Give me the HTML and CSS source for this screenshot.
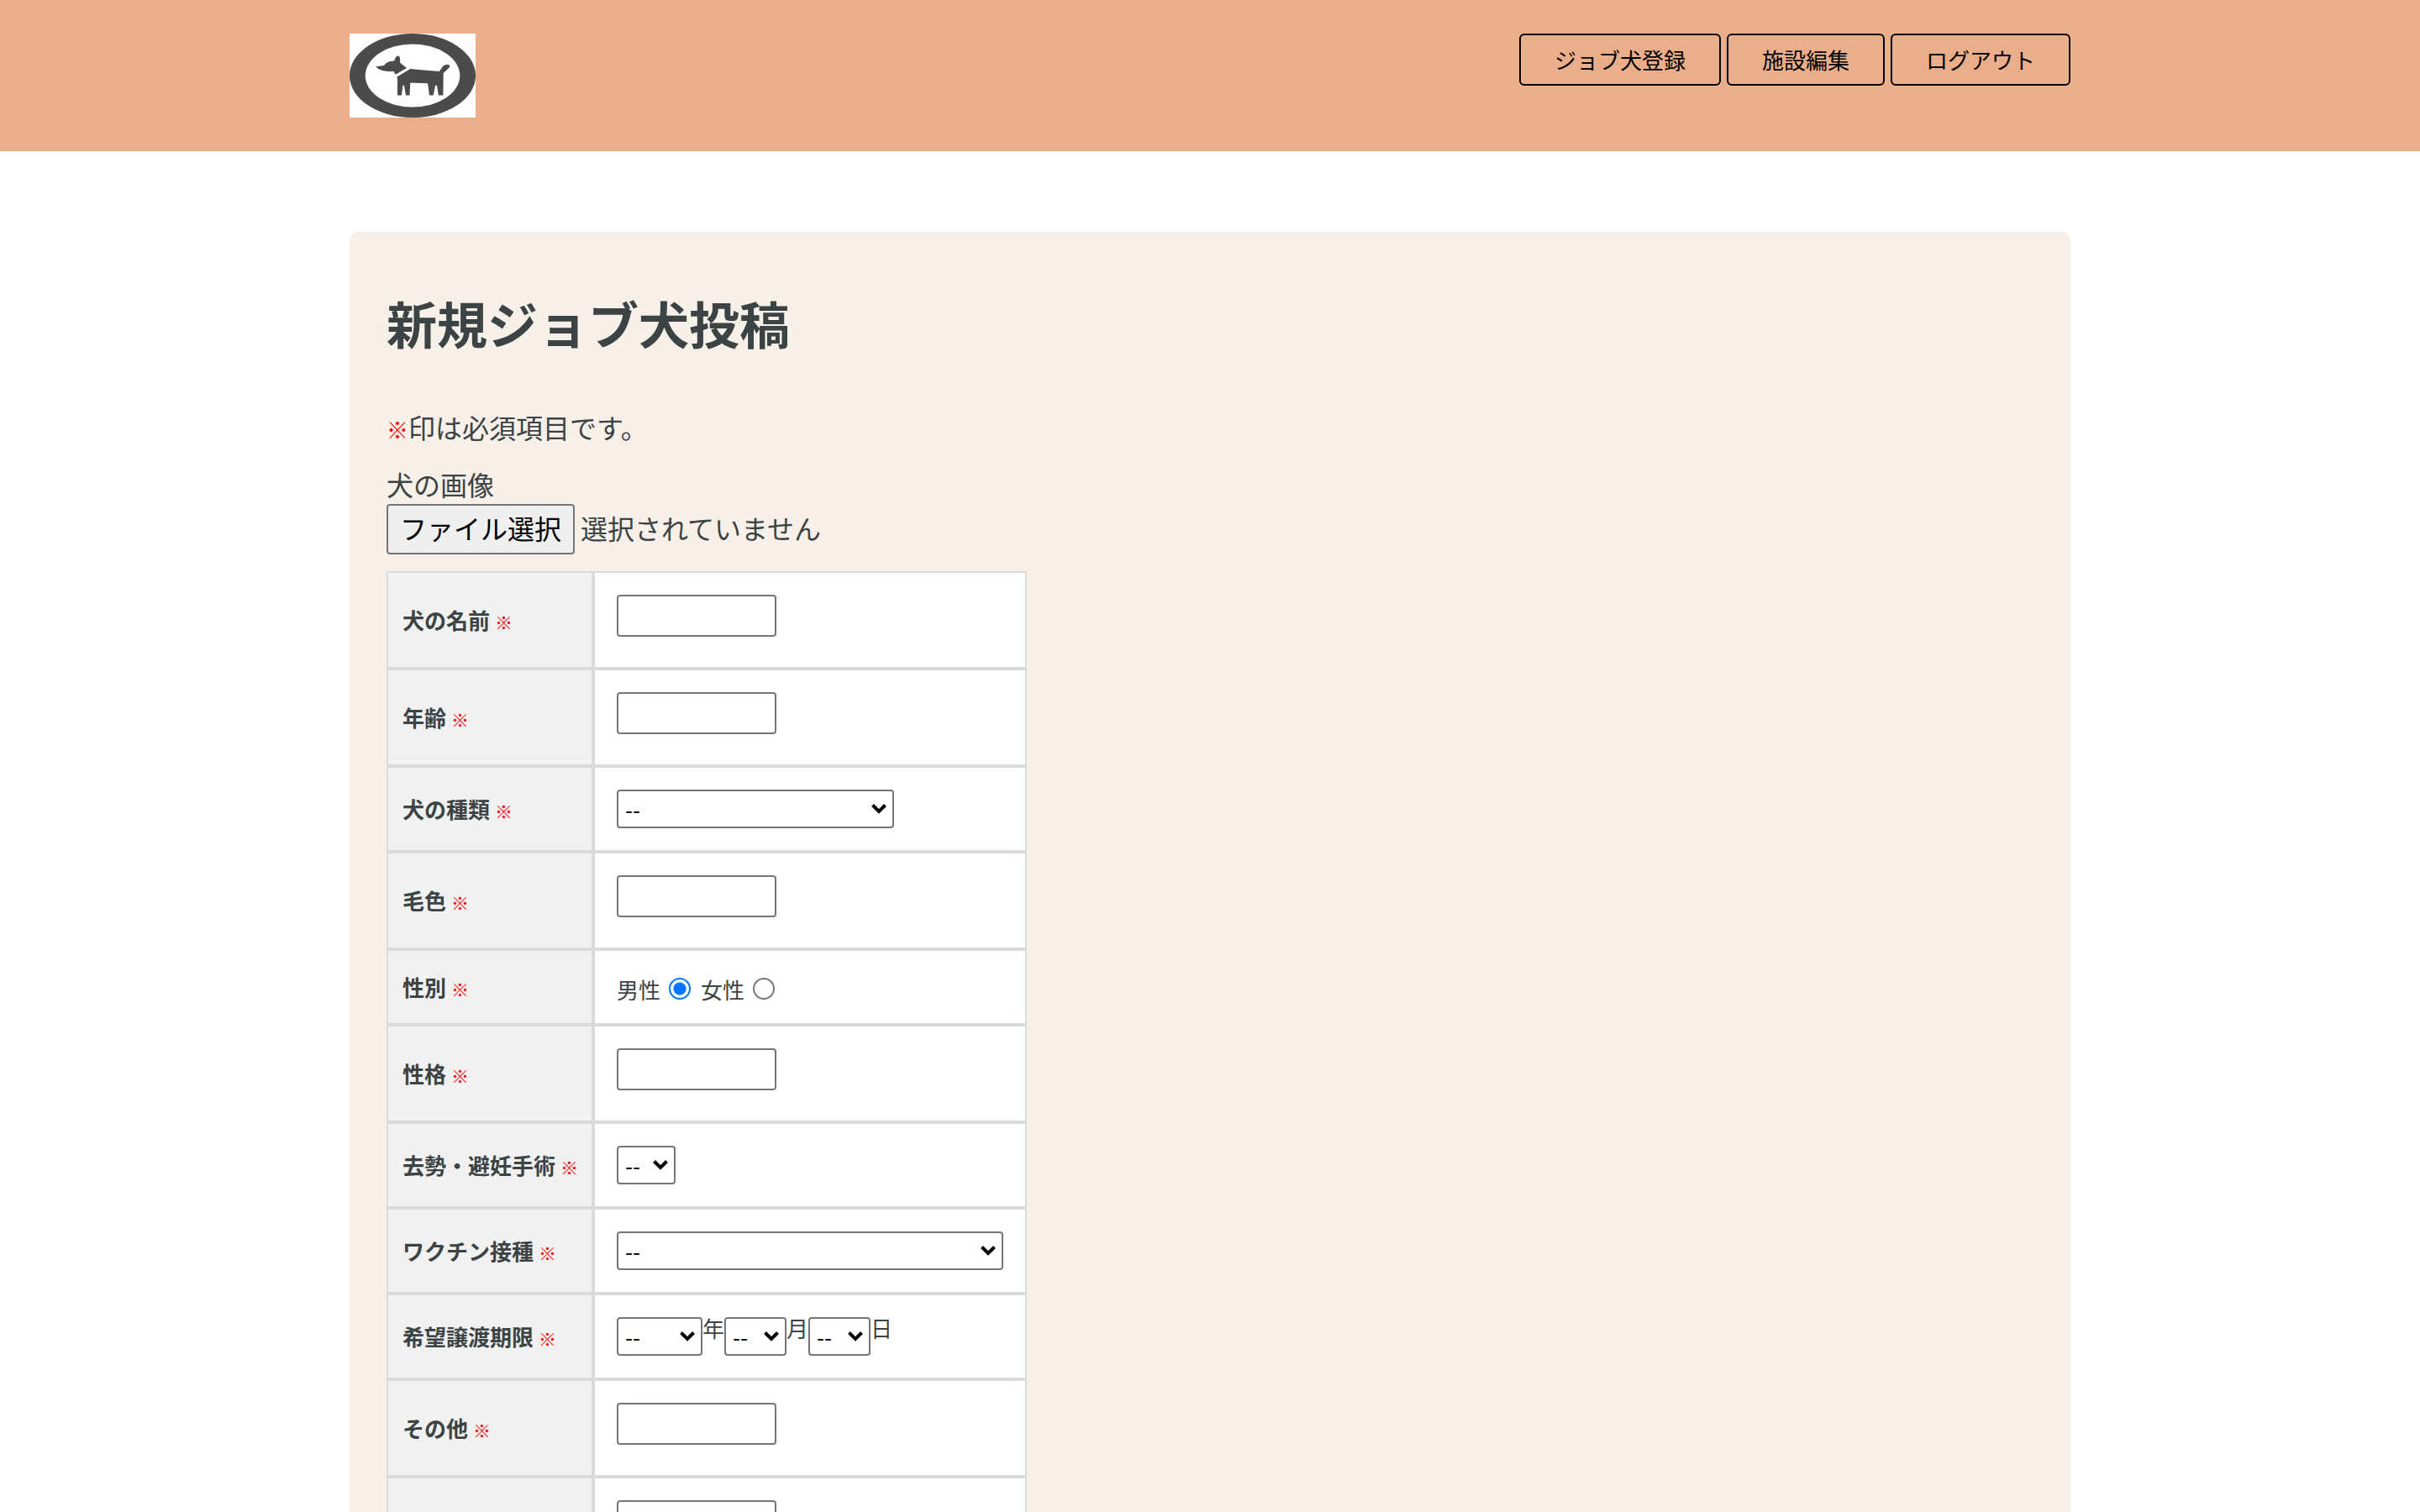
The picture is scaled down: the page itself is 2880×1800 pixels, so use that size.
FILE: index.html
```html
<!DOCTYPE html>
<html lang="ja">
<head>
<meta charset="utf-8">
<meta name="viewport" content="width=device-width, initial-scale=1">
<title>新規ジョブ犬投稿</title>
<link rel="stylesheet" href="styles.css">
</head>
<body>
<header class="site-header">
  <div class="container header-inner">
    <a class="logo" href="#" aria-label="ホーム">
      <svg class="logo-image" viewBox="0 0 150 100" aria-hidden="true">
        <rect width="150" height="100" fill="#fff"/>
        <ellipse cx="75" cy="50" rx="75" ry="50" fill="#4b4b4b"/>
        <ellipse cx="75" cy="50" rx="56.3" ry="37.5" fill="#fff"/>
        <g fill="#4b4b4b">
          <path d="M31 39.3L41 38Q44 33 53 32.6L55 28Q57 25.8 59 27Q60.6 29 60 34.5L68 41L54.7 48.7L52.3 44.7Q46 45.6 39 44Q34 42.6 31 39.3Z"/>
          <path d="M56 51.7L72.3 42L106.7 45L111.5 38.5Q114 36.4 118 37Q120 38.6 118.5 40.6L111.7 47L111.4 73.4H105.9L104 61.7H102L99.7 73.4H95L93 59.3L72.3 58.6L71.5 73.4H67L65 61.7H63.3L62 73.4H57V52.7Z"/>
        </g>
      </svg>
    </a>
    <nav class="nav">
      <a class="nav-button" href="#">ジョブ犬登録</a>
      <a class="nav-button" href="#">施設編集</a>
      <a class="nav-button" href="#">ログアウト</a>
    </nav>
  </div>
</header>
<main class="container">
  <form class="card">
    <h1 class="title">新規ジョブ犬投稿</h1>
    <p class="note"><span class="mark">※</span>印は必須項目です。</p>
    <label class="image-label" for="dog-image">犬の画像</label>
    <div class="file-row">
      <input class="file-input" type="file" id="dog-image">
      <label class="file-button" for="dog-image">ファイル選択</label>
      <span class="file-name">選択されていません</span>
    </div>
    <table class="form-table">
      <tr>
        <th scope="row"><label for="name">犬の名前</label> <span class="mark">※</span></th>
        <td><input class="text-input" type="text" id="name"></td>
      </tr>
      <tr>
        <th scope="row"><label for="age">年齢</label> <span class="mark">※</span></th>
        <td><input class="text-input" type="text" id="age"></td>
      </tr>
      <tr>
        <th scope="row"><label for="breed">犬の種類</label> <span class="mark">※</span></th>
        <td><select class="select select-breed" id="breed"><option>--</option></select></td>
      </tr>
      <tr>
        <th scope="row"><label for="color">毛色</label> <span class="mark">※</span></th>
        <td><input class="text-input" type="text" id="color"></td>
      </tr>
      <tr>
        <th scope="row">性別 <span class="mark">※</span></th>
        <td>
          <div class="radio-row">
            <label for="male">男性</label>
            <input class="radio" type="radio" name="sex" id="male" checked>
            <label for="female">女性</label>
            <input class="radio" type="radio" name="sex" id="female">
          </div>
        </td>
      </tr>
      <tr>
        <th scope="row"><label for="character">性格</label> <span class="mark">※</span></th>
        <td><input class="text-input" type="text" id="character"></td>
      </tr>
      <tr>
        <th scope="row"><label for="surgery">去勢・避妊手術</label> <span class="mark">※</span></th>
        <td><select class="select select-surgery" id="surgery"><option>--</option></select></td>
      </tr>
      <tr>
        <th scope="row"><label for="vaccine">ワクチン接種</label> <span class="mark">※</span></th>
        <td><select class="select select-vaccine" id="vaccine"><option>--</option></select></td>
      </tr>
      <tr>
        <th scope="row">希望譲渡期限 <span class="mark">※</span></th>
        <td>
          <div class="date-row">
            <select class="select select-year" id="year"><option>--</option></select><label for="year">年</label>
            <select class="select select-day" id="month"><option>--</option></select><label for="month">月</label>
            <select class="select select-day" id="day"><option>--</option></select><label for="day">日</label>
          </div>
        </td>
      </tr>
      <tr>
        <th scope="row"><label for="other">その他</label> <span class="mark">※</span></th>
        <td><input class="text-input" type="text" id="other"></td>
      </tr>
      <tr>
        <th scope="row"></th>
        <td><input class="text-input" type="text" aria-label="備考"></td>
      </tr>
    </table>
  </form>
</main>
</body>
</html>
```

FILE: styles.css
```css
* {
  box-sizing: border-box;
}

html {
  height: 100%;
}

body {
  height: 100%;
  margin: 0;
  overflow: hidden auto;
  scrollbar-width: none;
  background: #fff;
  color: #3b4344;
  font-family: "Noto Sans CJK JP", "Noto Sans", sans-serif;
  font-size: 32px;
  line-height: 46px;
}

.container {
  max-width: 2048px;
  margin: 0 auto;
}

.site-header {
  padding: 40px 0;
  background: #eaae8a;
}

.header-inner {
  display: flex;
  justify-content: space-between;
  align-items: flex-start;
}

.logo,
.logo-image {
  display: block;
  width: 150px;
  height: 100px;
}

.nav {
  display: flex;
  gap: 7px;
}

.nav-button {
  padding: 10px 40px;
  border: 2px solid #000;
  border-radius: 6px;
  color: #000;
  font-size: 26px;
  line-height: 38px;
  text-decoration: none;
}

.card {
  margin-top: 96px;
  padding: 63px 44px;
  border-radius: 10px;
  background: #f7f0e9;
}

.title {
  margin: 0 0 56px;
  font-size: 60px;
  line-height: 90px;
}

.note {
  margin: 0 0 22px;
}

.mark {
  color: #f00;
  font-size: 21px;
  font-weight: 400;
  line-height: 1;
}

.note .mark {
  font-size: 26px;
}

.image-label {
  display: block;
  margin-bottom: 1px;
}

.file-row {
  display: flex;
  gap: 7px;
  margin-bottom: 20px;
}

.file-input {
  position: absolute;
  width: 1px;
  height: 1px;
  opacity: 0;
}

.file-button {
  padding: 3px 14px 7px;
  border: 2px solid #767676;
  border-radius: 4px;
  background: #efefef;
  color: #000;
}

.file-name {
  padding-top: 5px;
}

.form-table {
  border-spacing: 0;
  font-size: 26px;
  line-height: 34px;
}

.form-table th,
.form-table td {
  border: 2px solid #dadada;
}

.form-table th {
  width: 246px;
  padding: 0 16px 0 17px;
  background: #f1f1f1;
  text-align: left;
  white-space: nowrap;
}

.form-table td {
  padding: 26px;
  background: #fff;
}

.text-input,
.select {
  display: block;
  border: 2px solid #767676;
  border-radius: 4px;
  background-color: #fff;
  color: #000;
  font: inherit;
}

.text-input {
  width: 190px;
  height: 50px;
  margin: 0 0 10px;
  padding: 2px 4px;
}

.select {
  height: 46px;
  margin: 0;
  padding: 0 8px;
  appearance: none;
  background-image: url("data:image/svg+xml,%3Csvg xmlns='http://www.w3.org/2000/svg' width='20' height='14'%3E%3Cpath d='M2.5 2.5L10 10L17.5 2.5' fill='none' stroke='%23000' stroke-width='4'/%3E%3C/svg%3E");
  background-repeat: no-repeat;
  background-position: right 6px center;
}

.select-breed {
  width: 330px;
}

.select-surgery {
  width: 70px;
}

.select-vaccine {
  width: 460px;
}

.select-year {
  width: 102px;
}

.select-day {
  width: 74px;
}

.radio-row {
  display: flex;
  align-items: flex-end;
  padding-top: 6px;
  line-height: 28px;
}

.radio {
  width: 26px;
  height: 26px;
  margin: 0 12px 2px 10px;
  appearance: none;
  border: 2px solid #767676;
  border-radius: 50%;
  background: #fff;
}

.radio:checked {
  border-color: #0075ff;
  background: radial-gradient(circle, #0075ff 7px, #fff 8px);
}

.date-row {
  display: flex;
  align-items: flex-start;
  line-height: 26px;
}
```
